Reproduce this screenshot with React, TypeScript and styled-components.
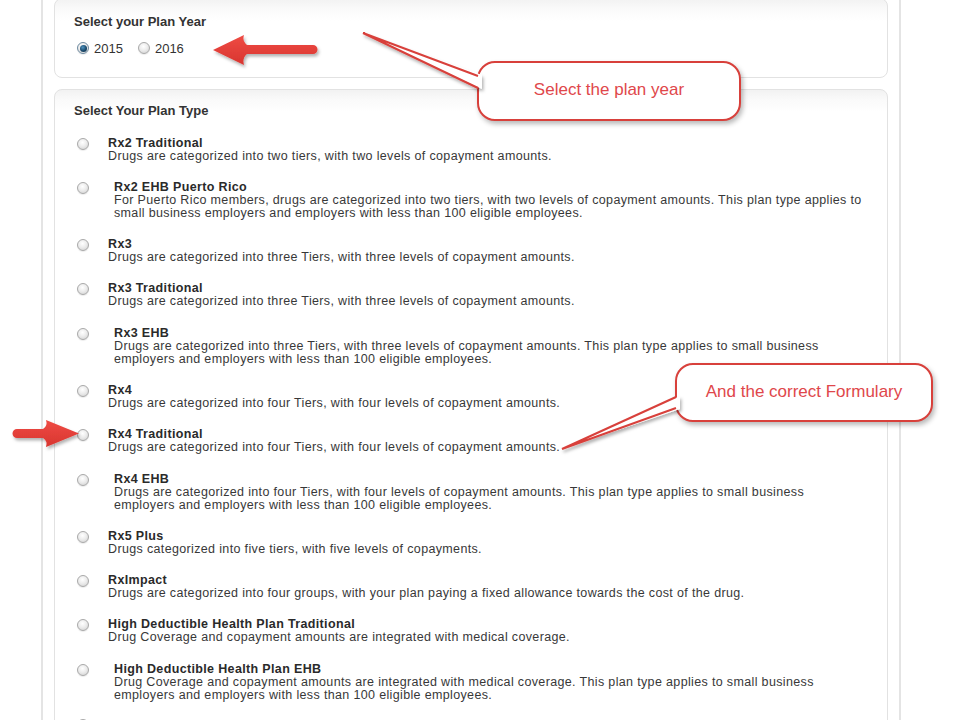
import React from "react";
import styled, { createGlobalStyle } from "styled-components";

const GlobalStyle = createGlobalStyle`
  html, body {
    margin: 0;
    padding: 0;
    background: #fff;
  }
  body {
    font-family: "Liberation Sans", Arial, sans-serif;
    color: #333;
  }
`;

const Stage = styled.div`
  position: relative;
  width: 960px;
  height: 720px;
  overflow: hidden;
  background: #fff;
`;

const Column = styled.main`
  box-sizing: border-box;
  width: 860px;
  min-height: 100%;
  margin-left: 41px;
  padding: 0 11px;
  border-left: 2px solid #e4e4e4;
  border-right: 2px solid #e4e4e4;
  display: flex;
  flex-direction: column;
  gap: 11px;
`;

const Panel = styled.section<{ $offset?: number; $height?: number }>`
  box-sizing: border-box;
  flex: none;
  height: ${({ $height }) => ($height ? `${$height}px` : "auto")};
  margin-top: ${({ $offset }) => $offset ?? 0}px;
  padding: ${({ $offset }) => ($offset ? 15 : 13)}px 19px ${({ $height }) => ($height ? 0 : 40)}px;
  border: 1px solid #e2e2e2;
  border-radius: 8px;
  background: linear-gradient(#f2f2f2 0, #fafafa 10px, #fff 22px);
`;

const PanelTitle = styled.h2`
  margin: 0;
  font-size: 13px;
  line-height: 15px;
  font-weight: bold;
  color: #333;
`;

const YearRow = styled.div`
  display: flex;
  align-items: center;
  height: 16px;
  margin-top: 11px;
  font-size: 13px;
  color: #333;
`;

const YearOption = styled.label`
  display: flex;
  align-items: center;
  gap: 5px;
  margin-left: 3px;
  margin-right: 12px;
`;

const Radio = styled.span<{ $checked?: boolean }>`
  position: relative;
  display: inline-block;
  flex: none;
  box-sizing: border-box;
  width: 12px;
  height: 12px;
  border-radius: 50%;
  border: 1px solid ${({ $checked }) => ($checked ? "#6d8aa0" : "#a9a9a9")};
  background: radial-gradient(circle at 45% 35%, #fff 0, #ededed 45%, #cdcdcd 100%);
  box-shadow: 0 1px 1px rgba(0, 0, 0, 0.08);

  &::after {
    content: "";
    display: ${({ $checked }) => ($checked ? "block" : "none")};
    position: absolute;
    left: 1.5px;
    top: 1.5px;
    width: 7px;
    height: 7px;
    border-radius: 50%;
    background: radial-gradient(circle at 40% 35%, #4f93c0 0, #1a4a6c 55%, #0e2f48 100%);
  }
`;

const PlanList = styled.div`
  margin-top: 17.5px;
`;

const PlanRow = styled.div`
  display: flex;
  margin-bottom: 18.3px;
`;

const RadioCell = styled.div<{ $lift?: number }>`
  box-sizing: border-box;
  width: 34px;
  flex: none;
  margin-top: ${({ $lift }) => -($lift ?? 0)}px;
  padding-left: 3px;
`;

const PlanText = styled.div<{ $indent?: number }>`
  margin: 1px 0 -1px;
  padding-left: ${({ $indent }) => $indent ?? 0}px;
  font-size: 12.5px;
  line-height: 13px;
  letter-spacing: 0.35px;
  white-space: nowrap;
`;

const PlanName = styled.div`
  font-weight: bold;
  color: #2a2a2a;
`;

const PlanDesc = styled.div`
  color: #383838;
`;

const Callout = styled.div<{ $x: number; $y: number; $w: number; $h: number }>`
  position: absolute;
  left: ${({ $x }) => $x}px;
  top: ${({ $y }) => $y}px;
  width: ${({ $w }) => $w}px;
  height: ${({ $h }) => $h}px;
  box-sizing: border-box;
  display: flex;
  align-items: center;
  justify-content: center;
  padding-bottom: 2px;
  border: 2px solid #d8403b;
  border-radius: 18px;
  background: #fff;
  box-shadow: 2px 3px 5px rgba(0, 0, 0, 0.28);
  color: #e0474b;
  font-size: 17px;
  z-index: 1;
`;

const Overlay = styled.svg`
  position: absolute;
  left: 0;
  top: 0;
  width: 960px;
  height: 720px;
  pointer-events: none;
  z-index: 2;
`;

type Plan = { name: string; lines: string[]; indent?: number };

const plans: Plan[] = [
  { name: "Rx2 Traditional", lines: ["Drugs are categorized into two tiers, with two levels of copayment amounts."] },
  {
    name: "Rx2 EHB Puerto Rico",
    indent: 6,
    lines: [
      "For Puerto Rico members, drugs are categorized into two tiers, with two levels of copayment amounts. This plan type applies to",
      "small business employers and employers with less than 100 eligible employees.",
    ],
  },
  { name: "Rx3", lines: ["Drugs are categorized into three Tiers, with three levels of copayment amounts."] },
  { name: "Rx3 Traditional", lines: ["Drugs are categorized into three Tiers, with three levels of copayment amounts."] },
  {
    name: "Rx3 EHB",
    indent: 6,
    lines: [
      "Drugs are categorized into three Tiers, with three levels of copayment amounts. This plan type applies to small business",
      "employers and employers with less than 100 eligible employees.",
    ],
  },
  { name: "Rx4", lines: ["Drugs are categorized into four Tiers, with four levels of copayment amounts."] },
  { name: "Rx4 Traditional", lines: ["Drugs are categorized into four Tiers, with four levels of copayment amounts."] },
  {
    name: "Rx4 EHB",
    indent: 6,
    lines: [
      "Drugs are categorized into four Tiers, with four levels of copayment amounts. This plan type applies to small business",
      "employers and employers with less than 100 eligible employees.",
    ],
  },
  { name: "Rx5 Plus", lines: ["Drugs categorized into five tiers, with five levels of copayments."] },
  {
    name: "RxImpact",
    lines: ["Drugs are categorized into four groups, with your plan paying a fixed allowance towards the cost of the drug."],
  },
  {
    name: "High Deductible Health Plan Traditional",
    lines: ["Drug Coverage and copayment amounts are integrated with medical coverage."],
  },
  {
    name: "High Deductible Health Plan EHB",
    indent: 6,
    lines: [
      "Drug Coverage and copayment amounts are integrated with medical coverage. This plan type applies to small business",
      "employers and employers with less than 100 eligible employees.",
    ],
  },
];

const Annotations = () => (
  <Overlay viewBox="0 0 960 720">
    <defs>
      <linearGradient id="arrowFill" x1="0" y1="0" x2="0" y2="1">
        <stop offset="0" stopColor="#ef4b44" />
        <stop offset="1" stopColor="#d8352f" />
      </linearGradient>
      <filter id="shadow" x="-20%" y="-40%" width="140%" height="180%">
        <feDropShadow dx="1.5" dy="2.5" stdDeviation="1.5" floodColor="#000" floodOpacity="0.3" />
      </filter>
    </defs>

    {/* year arrow, pointing left */}
    <path
      d="M213,50 L244,35 Q242,41 247,45 L313,45 A4.5,4.5 0 0 1 313,54 L247,54 Q242,58 244,65 Z"
      fill="url(#arrowFill)"
      filter="url(#shadow)"
    />

    {/* formulary arrow, pointing right */}
    <path
      d="M79,433.5 L46,420 Q48,426 43,429 L17,429 A4.5,4.5 0 0 0 17,438 L43,438 Q48,441 46,447 Z"
      fill="url(#arrowFill)"
      filter="url(#shadow)"
    />

    {/* callout tails */}
    <g filter="url(#shadow)">
      <polygon points="363,33 482,75 482,89" fill="#fff" />
      <polyline points="478,76 363,33 478,88" fill="none" stroke="#d8403b" strokeWidth="2" strokeLinejoin="miter" />
      <polygon points="562,449 680,396 680,409" fill="#fff" />
      <polyline points="676,397 562,449 676,408" fill="none" stroke="#d8403b" strokeWidth="2" strokeLinejoin="miter" />
    </g>
  </Overlay>
);

export default function App() {
  return (
    <Stage>
      <GlobalStyle />
      <Column>
        <Panel $offset={-2} $height={80}>
          <PanelTitle>Select your Plan Year</PanelTitle>
          <YearRow>
            <YearOption>
              <Radio $checked />
              2015
            </YearOption>
            <YearOption>
              <Radio />
              2016
            </YearOption>
          </YearRow>
        </Panel>

        <Panel>
          <PanelTitle>Select Your Plan Type</PanelTitle>
          <PlanList>
            {plans.map((plan) => (
              <PlanRow key={plan.name}>
                <RadioCell>
                  <Radio />
                </RadioCell>
                <PlanText $indent={plan.indent}>
                  <PlanName>{plan.name}</PlanName>
                  {plan.lines.map((line) => (
                    <PlanDesc key={line}>{line}</PlanDesc>
                  ))}
                </PlanText>
              </PlanRow>
            ))}
            <PlanRow>
              <RadioCell $lift={2}>
                <Radio />
              </RadioCell>
            </PlanRow>
          </PlanList>
        </Panel>
      </Column>

      <Callout $x={477} $y={61} $w={264} $h={60}>
        Select the plan year
      </Callout>
      <Callout $x={675} $y={363} $w={258} $h={59}>
        And the correct Formulary
      </Callout>
      <Annotations />
    </Stage>
  );
}
